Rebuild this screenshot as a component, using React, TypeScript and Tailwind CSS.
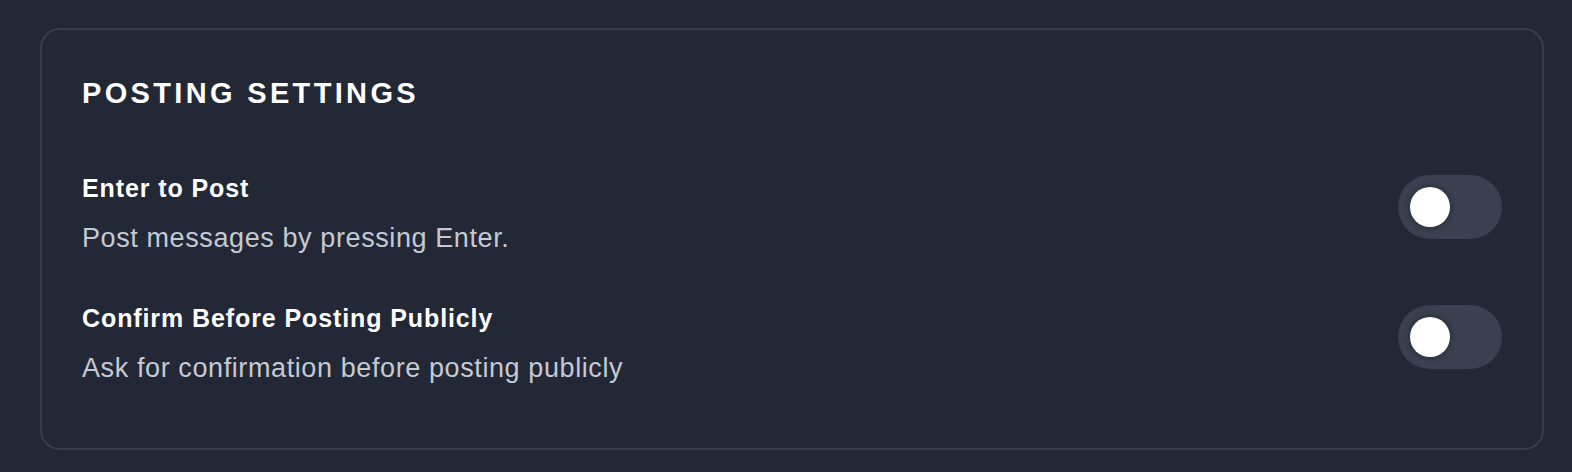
const settings = [
  { title: "Enter to Post", description: "Post messages by pressing Enter." },
  { title: "Confirm Before Posting Publicly", description: "Ask for confirmation before posting publicly" },
];

const Toggle = () => {
  return (
    <button
      type="button"
      role="switch"
      aria-checked={false}
      className="mt-[3px] flex h-[64px] w-[104px] shrink-0 items-center rounded-full bg-[#3a4050] px-3"
    >
      <span className="size-10 rounded-full bg-white shadow-[0_0_4px_2px_rgba(20,24,34,0.35)]" />
    </button>
  );
};

const App = () => {
  return (
    <div
      className="min-h-screen bg-[#222836] pl-10 pr-7 pt-7 pb-6"
      style={{ fontFamily: '"Liberation Sans", Arial, sans-serif' }}
    >
      <section className="rounded-[20px] border-2 border-[#363d4c] pl-10 pr-10 pt-[45px] pb-[64px]">
        <h2 className="text-[29px] leading-[36px] font-bold tracking-[0.115em] text-white">
          POSTING SETTINGS
        </h2>

        <div className="mt-[61px] flex flex-col gap-[48px]">
          {settings.map((item, index) => (
            <div key={index} className="flex items-start justify-between">
              <div>
                <p className="text-[25px] leading-[32px] font-bold tracking-[0.9px] text-white">
                  {item.title}
                </p>
                <p className="mt-[18px] text-[27px] leading-[32px] tracking-[0.6px] text-[#c5c9d2]">
                  {item.description}
                </p>
              </div>
              <Toggle />
            </div>
          ))}
        </div>
      </section>
    </div>
  );
};

export default App;
